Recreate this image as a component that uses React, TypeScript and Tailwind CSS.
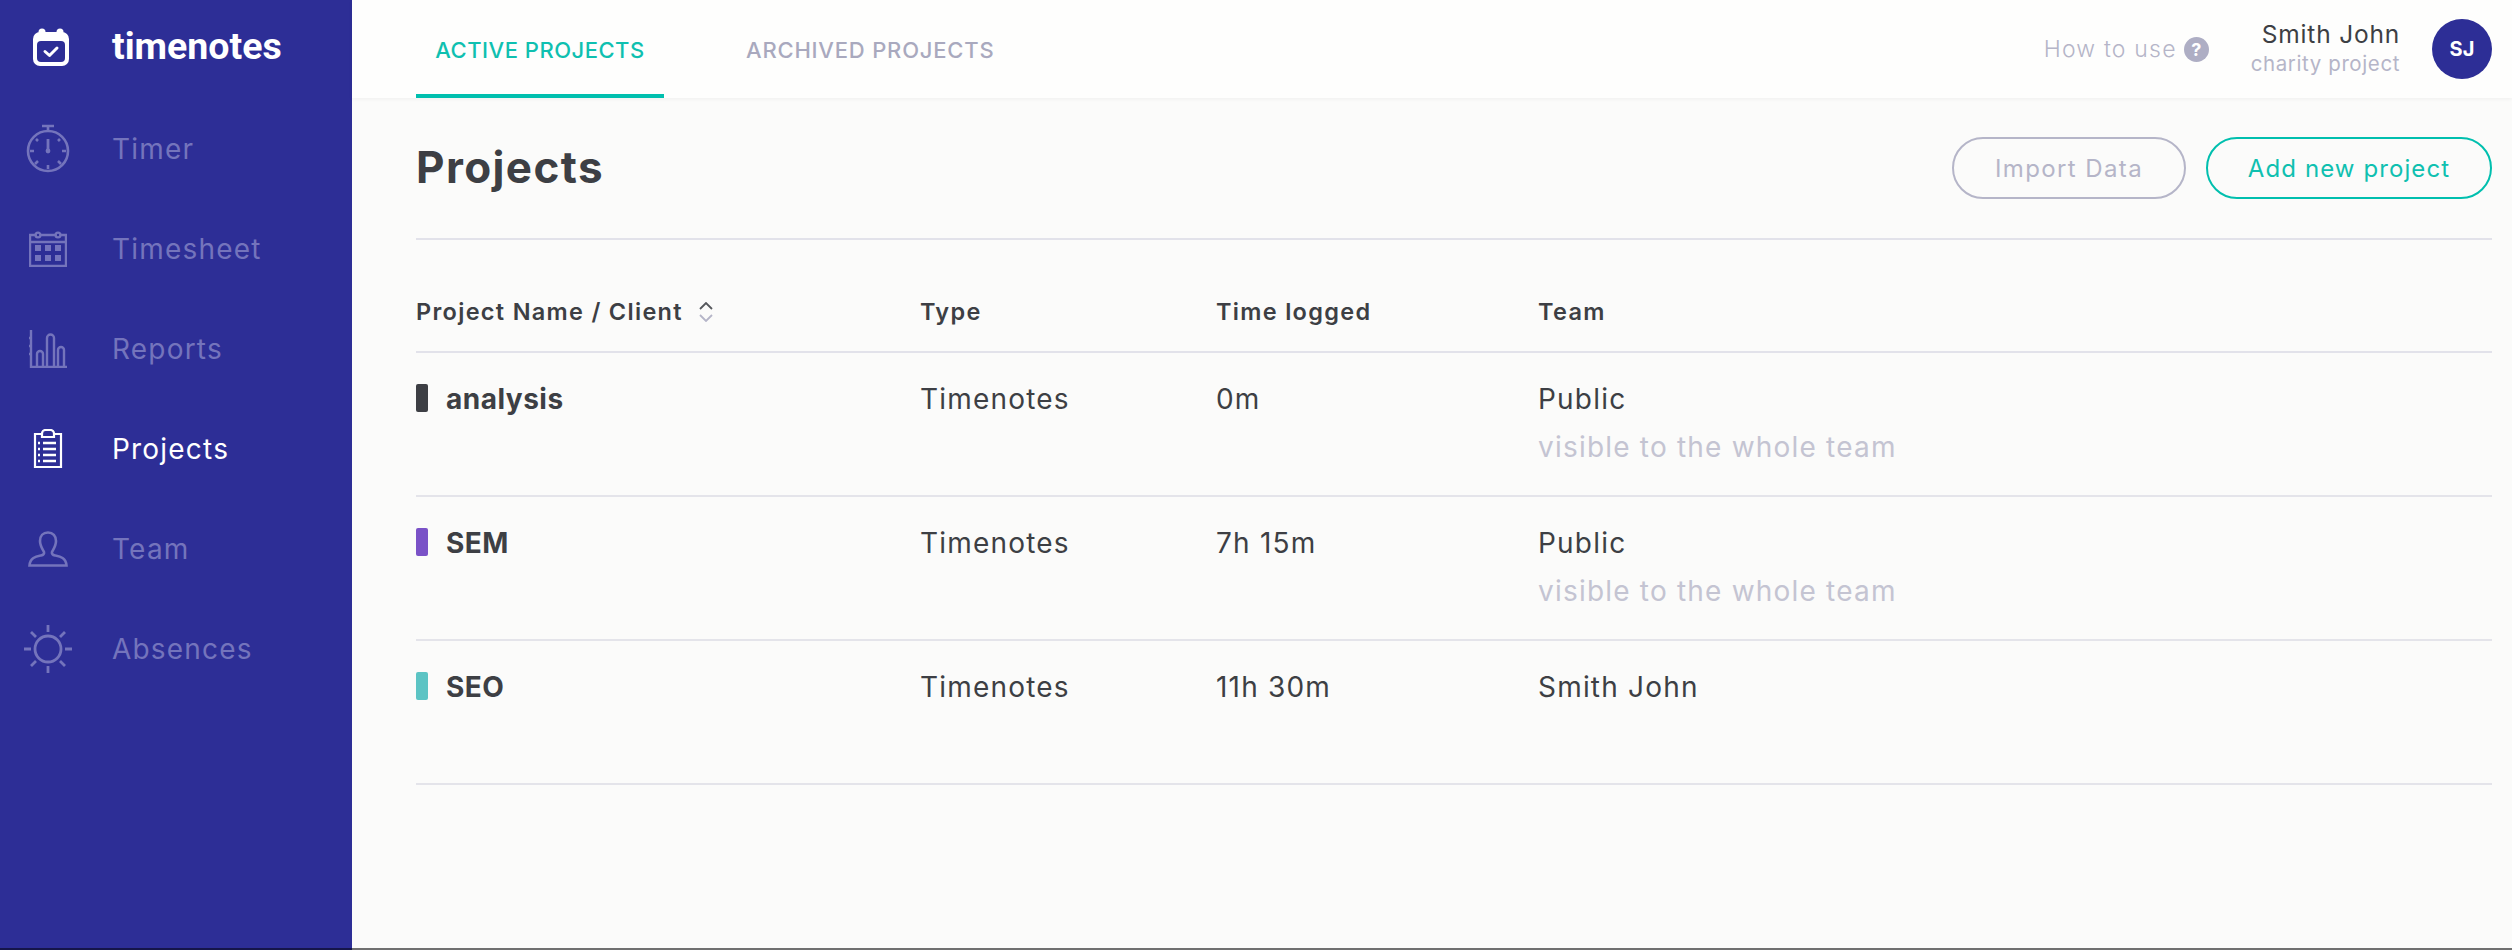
import type { ReactNode } from "react";

const BODY = "font-['Inter','Liberation_Sans',sans-serif]";

function LogoIcon() {
  return (
    <svg viewBox="0 0 36 38" className="w-[36px] h-[38px]">
      <circle cx="9" cy="4" r="3.5" fill="#fff" />
      <circle cx="27" cy="4" r="3.5" fill="#fff" />
      <rect x="0" y="4" width="36" height="34" rx="7" fill="#fff" />
      <rect x="4" y="13" width="28" height="21" rx="4" fill="#2d2e96" />
      <path d="M12 23.5l4.5 4L24 20" fill="none" stroke="#fff" strokeWidth="3" strokeLinecap="round" strokeLinejoin="round" />
    </svg>
  );
}

function TimerIcon() {
  return (
    <svg viewBox="0 0 44 50" className="w-[44px] h-[50px]" fill="none" stroke="currentColor" strokeWidth="2.6">
      <circle cx="22" cy="27" r="20" />
      <path d="M16 2h12M22 2v5" />
      <path d="M22 15v11" strokeWidth="2.8" />
      <circle cx="22" cy="27" r="2.4" fill="currentColor" stroke="none" />
      <path d="M22 41v4M8 27H4M40 27h-4M12 37l-3 3M32 37l3 3M12 17l-2-2M32 17l2-2" />
    </svg>
  );
}

function SheetIcon() {
  return (
    <svg viewBox="0 0 38 36" className="w-[38px] h-[36px]" fill="none" stroke="currentColor" strokeWidth="2.4">
      <path d="M1 4h36v31H1zM1 11h36" />
      <circle cx="9" cy="4" r="2.4" fill="#2d2e96" />
      <circle cx="29" cy="4" r="2.4" fill="#2d2e96" />
      <g fill="currentColor" stroke="none">
        <rect x="6" y="14" width="6" height="6" />
        <rect x="16" y="14" width="6" height="6" />
        <rect x="26" y="14" width="6" height="6" />
        <rect x="6" y="24" width="6" height="6" />
        <rect x="16" y="24" width="6" height="6" />
        <rect x="26" y="24" width="6" height="6" />
      </g>
    </svg>
  );
}

function ReportsIcon() {
  return (
    <svg viewBox="0 0 38 38" className="w-[38px] h-[38px]" fill="none" stroke="currentColor" strokeWidth="2.4">
      <path d="M2 0v37h36M2 8H0M2 16H0M2 24H0" />
      <path d="M8 37V24a3 3 0 0 1 6 0v13M18 37V8a3.5 3.5 0 0 1 7 0v29M29 37V20a3 3 0 0 1 6 0v17" />
    </svg>
  );
}

function ClipboardIcon() {
  return (
    <svg viewBox="0 0 30 40" className="w-[30px] h-[40px]" fill="none" stroke="currentColor" strokeWidth="2.2">
      <path d="M9 5H2v33h26V5h-7" />
      <path d="M9 8V4.5A3.5 3.5 0 0 1 12.5 1h5A3.5 3.5 0 0 1 21 4.500V8z" />
      <path d="M10 14h13M10 20h13M10 26h13M10 32h13" strokeWidth="2.6" />
      <path d="M5 14h2M5 20h2M5 26h2M5 32h2" strokeWidth="2.6" />
    </svg>
  );
}

function TeamIcon() {
  return (
    <svg viewBox="0 0 40 36" className="w-[40px] h-[36px]" fill="none" stroke="currentColor" strokeWidth="2.6">
      <path d="M20 1.500c-5 0-8 3.500-8 8.500 0 5 3 9 4 11 .5 1.500-.5 3-3 3.500-5 1-11 2-11.500 10h37c-.5-8-6.500-9-11.500-10-2.500-.5-3.500-2-3-3.500 1-2 4-6 4-11 0-5-3-8.500-8-8.500z" />
    </svg>
  );
}

function SunIcon() {
  return (
    <svg viewBox="0 0 48 48" className="w-[48px] h-[48px]" fill="none" stroke="currentColor" strokeWidth="2.8">
      <circle cx="24" cy="24" r="13" />
      <path d="M24 0v7M24 41v7M0 24h7M41 24h7M7 7l5 5M36 36l5 5M41 7l-5 5M12 36l-5 5" />
    </svg>
  );
}

const NAV = [
  { label: "Timer", icon: <TimerIcon /> },
  { label: "Timesheet", icon: <SheetIcon /> },
  { label: "Reports", icon: <ReportsIcon /> },
  { label: "Projects", icon: <ClipboardIcon />, active: true },
  { label: "Team", icon: <TeamIcon /> },
  { label: "Absences", icon: <SunIcon /> },
];

const ROWS = [
  { name: "analysis", color: "bg-[#3d3f44]", time: "0m", team: "Public", sub: "visible to the whole team" },
  { name: "SEM", color: "bg-[#7a52c7]", time: "7h 15m", team: "Public", sub: "visible to the whole team" },
  { name: "SEO", color: "bg-[#5cc4c4]", time: "11h 30m", team: "Smith John" },
];

function NavItem({ label, icon, active }: { label: string; icon: ReactNode; active?: boolean }) {
  return (
    <div className={`h-[100px] flex items-center ${active ? "text-white" : "text-[#7474bc]"}`}>
      <div className="w-[96px] mr-[16px] flex justify-center shrink-0">{icon}</div>
      <span className="text-[28px] font-normal tracking-[1.2px]">{label}</span>
    </div>
  );
}

export default function App() {
  return (
    <div className={`w-[2512px] h-[950px] flex flex-col overflow-hidden ${BODY}`}>
      <div className="flex h-[948px]">
        <aside className="w-[352px] shrink-0 bg-[#2d2e96]">
          <div className="h-[99px] flex items-center">
            <div className="w-[112px] pl-[33px] shrink-0 -mt-[5px]">
              <LogoIcon />
            </div>
            <span className="font-['Roboto',sans-serif] font-bold text-[37.5px] text-white leading-none -mt-[5px]">timenotes</span>
          </div>
          <nav>
            {NAV.map(n => (
              <NavItem key={n.label} {...n} />
            ))}
          </nav>
        </aside>

        <div className="flex-1 flex flex-col bg-[#fbfbfa]">
          <header className="h-[98px] bg-[#fefefd] flex items-center pl-[64px] pr-[20px] shadow-[0_1px_4px_rgba(0,0,0,0.05)]">
            <div className="w-[248px] h-full flex items-center justify-center border-b-4 border-[#00bfae] text-[#0fc0b0] text-[22px] tracking-[0.5px] font-medium pt-[6px]">
              ACTIVE PROJECTS
            </div>
            <div className="ml-[82px] text-[#a9a9be] text-[22px] tracking-[0.8px] font-medium mt-[2px]">ARCHIVED PROJECTS</div>
            <div className="ml-auto flex items-center gap-[7px] text-[#b5b5c8] text-[23px] tracking-[1.2px] font-light">
              How to use
              <span className="w-[25px] h-[25px] rounded-full bg-[#aeaec4] text-white text-[18px] tracking-normal font-bold flex items-center justify-center">?</span>
            </div>
            <div className="ml-[42px] flex flex-col items-end">
              <span className="text-[24.5px] tracking-[0.8px] leading-[30px] text-[#3d3f44]">Smith John</span>
              <span className="text-[20.5px] tracking-[0.6px] leading-[30px] text-[#b5b5c8]">charity project</span>
            </div>
            <div className="ml-[32px] w-[60px] h-[60px] rounded-full bg-[#2d2e96] text-white text-[20px] font-bold flex items-center justify-center">
              SJ
            </div>
          </header>

          <main className="flex-1 pl-[64px] pr-[20px]">
            <div className="h-[142px] flex items-center border-b-2 border-[#e2e2ea]">
              <h1 className="text-[44px] font-bold tracking-[1.4px] text-[#3d3f44] leading-none -mt-[2px]">Projects</h1>
              <button className="ml-auto w-[234px] h-[62px] pt-[2px] rounded-full border-2 border-[#b5b5c8] text-[#b5b5c8] text-[24px] tracking-[1.4px]">Import Data</button>
              <button className="ml-[20px] w-[286px] h-[62px] pt-[2px] rounded-full border-2 border-[#00bfae] text-[#0fc0b0] text-[24px] tracking-[1.1px]">Add new project</button>
            </div>

            <div className="h-[113px] pt-[32px] grid grid-cols-[504px_296px_322px_1fr] items-center border-b-2 border-[#e2e2ea] text-[23.5px] tracking-[1.3px] font-semibold text-[#3d3f44]">
              <div className="flex items-center gap-[15px]">
                Project Name / Client
                <svg viewBox="0 0 16 20" className="w-[16px] h-[20px]" fill="none" strokeWidth="1.800">
                  <path d="M2 7l6-6 6 6" stroke="#55575c" />
                  <path d="M2 13l6 6 6-6" stroke="#b5b5c8" />
                </svg>
              </div>
              <div>Type</div>
              <div>Time logged</div>
              <div>Team</div>
            </div>

            {ROWS.map(r => (
              <div key={r.name} className="h-[144px] grid grid-cols-[504px_296px_322px_1fr] border-b-2 border-[#e4e4ea] pt-[26px] text-[28px] tracking-[1.2px] leading-[40px] text-[#3d3f44]">
                <div className="flex items-start gap-[18px]">
                  <span className={`w-[12px] h-[28px] rounded-[2px] mt-[5px] ${r.color}`} />
                  <span className="font-bold tracking-[0.5px]">{r.name}</span>
                </div>
                <div>Timenotes</div>
                <div>{r.time}</div>
                <div>
                  <div>{r.team}</div>
                  {r.sub && <div className="mt-[8px] text-[#c4c4d2]">{r.sub}</div>}
                </div>
              </div>
            ))}
          </main>
        </div>
      </div>
      <div className="h-[2px] flex">
        <div className="w-[352px] bg-[#15154a]" />
        <div className="flex-1 bg-[#707070]" />
      </div>
    </div>
  );
}
